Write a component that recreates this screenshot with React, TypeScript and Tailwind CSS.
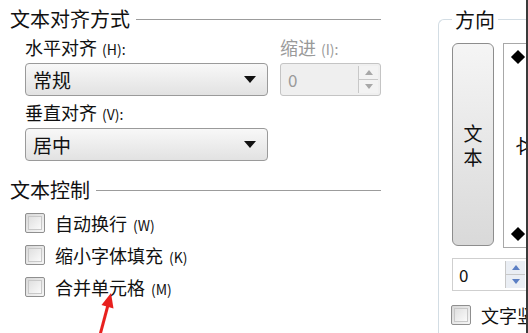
import React from 'react';

const font = { fontFamily: '"Noto Sans CJK SC", "Noto Sans", sans-serif' };

const Caret: React.FC = () => (
  <svg width="12" height="7" viewBox="0 0 12 7">
    <polygon points="0,0 12,0 6,7" fill="#111" />
  </svg>
);

const Select: React.FC<{ value: string }> = ({ value }) => (
  <div className="flex h-[33px] w-[243px] items-center justify-between rounded-[4px] border border-[#9a9a9a] bg-gradient-to-b from-[#f8f8f8] to-[#e2e2e2] pl-[7px] pr-[11px]">
    <span className="text-[19px] leading-none text-[#111]">{value}</span>
    <Caret />
  </div>
);

const SpinArrows: React.FC<{ color: string; bg: string }> = ({ color, bg }) => (
  <div className={`flex h-full w-[20px] flex-col border-l border-[#c8c8c8] ${bg}`}>
    <div className="flex flex-1 items-center justify-center border-b border-[#c8c8c8]">
      <svg width="8" height="5" viewBox="0 0 8 5">
        <polygon points="0,5 8,5 4,0" fill={color} />
      </svg>
    </div>
    <div className="flex flex-1 items-center justify-center">
      <svg width="8" height="5" viewBox="0 0 8 5">
        <polygon points="0,0 8,0 4,5" fill={color} />
      </svg>
    </div>
  </div>
);

const Checkbox: React.FC<{ label: string; hotkey?: string }> = ({ label, hotkey }) => (
  <div className="flex h-[32px] items-center gap-[10px] whitespace-nowrap">
    <div className="h-[20px] w-[20px] shrink-0 rounded-[2px] border border-[#8f8f8f] bg-gradient-to-br from-[#d8d8d8] to-[#f6f6f6] p-[2px]">
      <div className="h-full w-full border border-[#c8c8c8] bg-gradient-to-br from-[#e0e0e0] to-[#fafafa]" />
    </div>
    <span className="text-[18px] leading-none text-[#111]">
      {label}
      {hotkey && <span className="ml-[6px] text-[14px]">{hotkey}</span>}
    </span>
  </div>
);

// group caption followed by a thin etched rule
const GroupTitle: React.FC<{ title: string }> = ({ title }) => (
  <div className="relative h-[22px]">
    <div className="absolute left-0 right-0 top-[11px] border-t border-solid border-[#9c9c9c]" />
    <span className="relative bg-white pr-[6px] text-[20px] leading-[22px] text-[#111]">{title}</span>
  </div>
);

export default function App() {
  return (
    <div className="relative h-[333px] w-[528px] overflow-hidden bg-white" style={font}>
      <div className="flex">
        {/* left column */}
        <div className="ml-[10px] mt-[8px] flex w-[371px] shrink-0 flex-col">
          <GroupTitle title="文本对齐方式" />
          <div className="mt-[6px] flex gap-[12px] pl-[15px]">
            <div className="flex flex-col">
              <span className="text-[18px] leading-[22px] text-[#111]">
                水平对齐<span className="ml-[5px] text-[14px]">(H):</span>
              </span>
              <div className="mt-[3px]">
                <Select value="常规" />
              </div>
              <span className="mt-[5px] text-[18px] leading-[22px] text-[#111]">
                垂直对齐<span className="ml-[5px] text-[14px]">(V):</span>
              </span>
              <div className="mt-[3px]">
                <Select value="居中" />
              </div>
            </div>
            <div className="flex flex-col">
              <span className="text-[18px] leading-[22px] text-[#9a9a9a]">
                缩进<span className="ml-[5px] text-[14px]">(I):</span>
              </span>
              <div className="mt-[3px] flex h-[33px] w-[101px] items-center rounded-[3px] border border-[#c4c4c4] bg-[#efefef] p-[2px]">
                <span className="flex-1 pl-[5px] text-[17px] leading-none text-[#9a9a9a]">0</span>
                <SpinArrows color="#a8a8a8" bg="bg-[#f3f3f3]" />
              </div>
            </div>
          </div>
          <div className="mt-[18px]">
            <GroupTitle title="文本控制" />
          </div>
          <div className="mt-[6px] flex flex-col pl-[15px]">
            <Checkbox label="自动换行" hotkey="(W)" />
            <Checkbox label="缩小字体填充" hotkey="(K)" />
            <Checkbox label="合并单元格" hotkey="(M)" />
          </div>
        </div>

        {/* right group: 方向 */}
        <div className="ml-[57px] mt-[19px] h-[330px] min-w-0 flex-1 rounded-tl-[6px] border-l border-t border-[#d3dde4] pl-[13px]">
          <div className="-mt-[11px] flex">
            <span className="bg-white px-[3px] text-[20px] leading-[22px] text-[#111]">方向</span>
          </div>
          <div className="mt-[12px] flex gap-[9px]">
            <div className="flex h-[203px] w-[42px] shrink-0 flex-col items-center justify-center gap-[5px] rounded-[6px] border border-[#8d8d8d] bg-gradient-to-b from-[#f5f5f5] to-[#d9d9d9]">
              <span className="text-[19px] leading-none text-[#111]">文</span>
              <span className="text-[19px] leading-none text-[#111]">本</span>
            </div>
            <div className="relative h-[205px] flex-1 border border-[#a8a8a8] bg-white">
              <div className="absolute left-[9px] top-[8px] h-[10px] w-[10px] rotate-45 bg-black" />
              <div className="absolute left-[9px] top-[185px] h-[10px] w-[10px] rotate-45 bg-black" />
              <span className="absolute left-[12px] top-[92px] -rotate-90 text-[20px] leading-none text-[#111]">
                文
              </span>
            </div>
          </div>
          <div className="mt-[10px] flex h-[33px] items-center border border-[#cfcfcf] bg-white p-[2px]">
            <span className="flex-1 pl-[4px] text-[17px] leading-none text-[#111]">0</span>
            <SpinArrows color="#5b7fc4" bg="bg-[#eaeef4]" />
          </div>
          <div className="-ml-[1px] mt-[8px]">
            <Checkbox label="文字竖排" />
          </div>
        </div>
      </div>

      {/* right dark edge */}
      <div className="absolute right-0 top-0 h-full w-[2px] bg-[#3a3a3a]" />

      {/* red annotation arrow */}
      <svg className="absolute left-[85px] top-[285px]" width="40" height="48" viewBox="0 0 40 48">
        <line x1="15" y1="50" x2="23" y2="20" stroke="#e8201e" strokeWidth="3" />
        <polygon points="26,8 28.5,23.5 16.5,20" fill="#e8201e" />
      </svg>
    </div>
  );
}
